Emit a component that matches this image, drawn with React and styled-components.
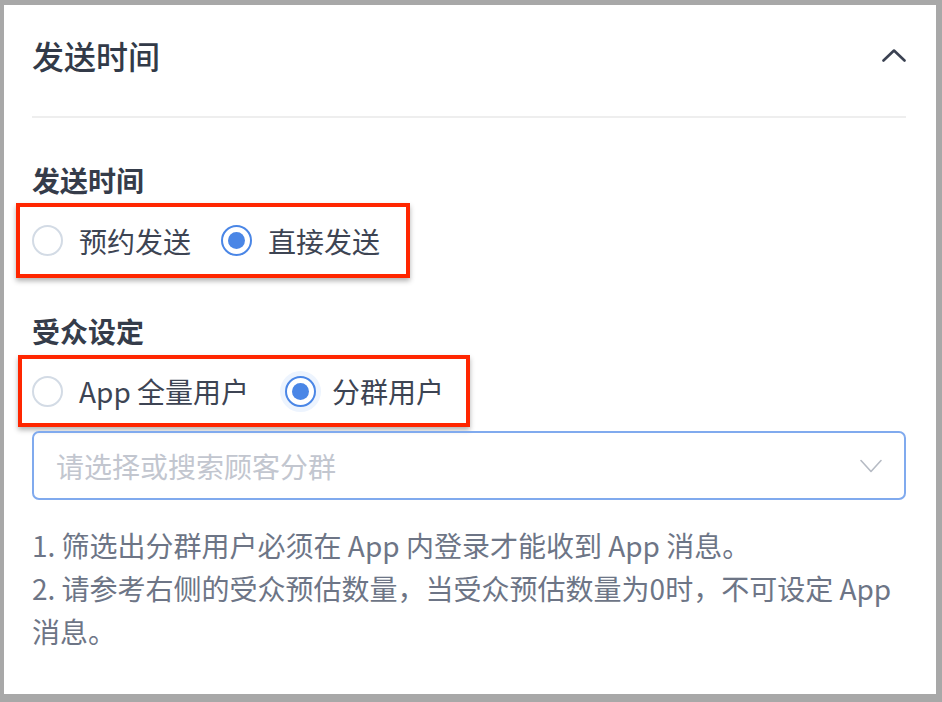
import React from "react";
import styled, { createGlobalStyle } from "styled-components";

const Global = createGlobalStyle`
  html, body { margin: 0; padding: 0; background: #a8a8a8; }
  body { font-family: "Noto Sans CJK SC", "Noto Sans", sans-serif; }
  * { box-sizing: border-box; }
`;

const Frame = styled.div`
  width: 942px;
  height: 702px;
  padding: 5px 6px 8px 4px;
  background: #a8a8a8;
`;

const Panel = styled.section`
  width: 932px;
  height: 689px;
  background: #ffffff;
  padding: 0 30px 0 28px;
  display: flex;
  flex-direction: column;
`;

const Header = styled.header`
  height: 111px;
  padding-bottom: 12px;
  display: flex;
  align-items: center;
  justify-content: space-between;
`;

const Title = styled.h2`
  margin: 0;
  font-size: 32px;
  font-weight: 500;
  color: #323a48;
  line-height: 40px;
`;

const Divider = styled.div`
  height: 2px;
  background: #eeeeee;
`;

const Label = styled.div`
  margin-top: ${(p) => p.$mt}px;
  font-size: 28px;
  font-weight: 600;
  color: #353c4a;
  line-height: 36px;
`;

const Highlight = styled.div`
  align-self: flex-start;
  margin-top: ${(p) => p.$mt}px;
  margin-left: ${(p) => p.$ml}px;
  width: ${(p) => p.$w}px;
  height: ${(p) => p.$h}px;
  border: 4px solid #ff2600;
  box-shadow: 0 3px 5px rgba(0, 0, 0, 0.3);
  padding-left: ${(p) => p.$pl}px;
  display: flex;
  align-items: center;
  gap: ${(p) => p.$gap}px;
`;

const RadioItem = styled.label`
  display: flex;
  align-items: center;
  gap: 16px;
  font-size: 28px;
  color: #3d4453;
  line-height: 36px;
`;

const Circle = styled.span`
  width: 31px;
  height: 31px;
  border-radius: 50%;
  border: 2px solid ${(p) => (p.$checked ? "#4a86e6" : "#d3dbe5")};
  background: #fff;
  display: flex;
  align-items: center;
  justify-content: center;
  box-shadow: ${(p) => (p.$focus ? "0 0 0 5px #edf4fe" : "none")};
  &::after {
    content: "";
    display: ${(p) => (p.$checked ? "block" : "none")};
    width: 17px;
    height: 17px;
    border-radius: 50%;
    background: #4a86e6;
  }
`;

const Select = styled.div`
  margin-top: 4px;
  height: 69px;
  border: 2px solid #80aaee;
  border-radius: 7px;
  padding: 0 22px 0 22px;
  display: flex;
  align-items: center;
  justify-content: space-between;
`;

const Placeholder = styled.span`
  font-size: 28px;
  color: #c2c6cf;
  line-height: 36px;
`;

const Notes = styled.div`
  margin-top: 24px;
  font-size: 28px;
  line-height: 43px;
  color: #6d7586;
`;

function Radio({ checked, focus, children }) {
  return (
    <RadioItem>
      <Circle $checked={checked} $focus={focus} />
      <span>{children}</span>
    </RadioItem>
  );
}

export default function App() {
  return (
    <>
      <Global />
      <Frame>
        <Panel>
          <Header>
            <Title>发送时间</Title>
            <svg width="24" height="14" viewBox="0 0 24 14">
              <polyline points="1.5,12.5 12,2.5 22.5,12.5" fill="none" stroke="#3b4252" strokeWidth="2.6" strokeLinecap="round" strokeLinejoin="round" />
            </svg>
          </Header>
          <Divider />
          <Label $mt={44}>发送时间</Label>
          <Highlight $mt={5} $ml={-16} $w={394} $h={75} $pl={12} $gap={30}>
            <Radio>预约发送</Radio>
            <Radio checked>直接发送</Radio>
          </Highlight>
          <Label $mt={35}>受众设定</Label>
          <Highlight $mt={6} $ml={-14} $w={452} $h={72} $pl={10} $gap={36}>
            <Radio>App 全量用户</Radio>
            <Radio checked focus>分群用户</Radio>
          </Highlight>
          <Select>
            <Placeholder>请选择或搜索顾客分群</Placeholder>
            <svg width="22" height="14" viewBox="0 0 22 14">
              <polyline points="1,1.5 11,12.5 21,1.5" fill="none" stroke="#b6bbc4" strokeWidth="1.6" strokeLinecap="round" strokeLinejoin="round" />
            </svg>
          </Select>
          <Notes>
            1. 筛选出分群用户必须在 App 内登录才能收到 App 消息。
            <br />
            2. 请参考右侧的受众预估数量，当受众预估数量为0时，不可设定 App 消息。
          </Notes>
        </Panel>
      </Frame>
    </>
  );
}
